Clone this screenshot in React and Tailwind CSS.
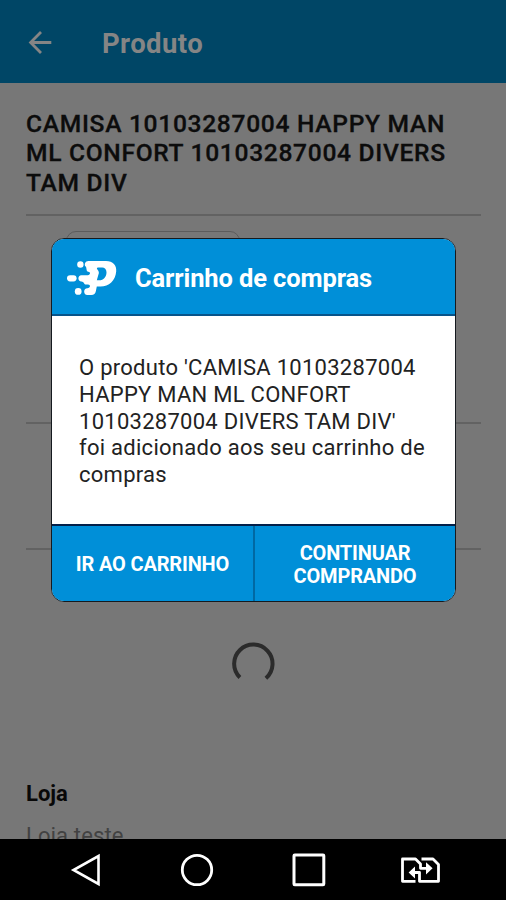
const roboto = "font-['Roboto','Liberation_Sans',sans-serif]";

function PLogo() {
  return (
    <svg width="50" height="36" viewBox="0 0 50 36" className="shrink-0" fill="#fff">
      <circle cx="13.4" cy="4.5" r="3.2" />
      <rect x="0" y="15.2" width="9.6" height="6.2" rx="3.1" />
      <circle cx="11.2" cy="31.4" r="3.4" />
      <path
        fillRule="evenodd"
        d="M21.5 .9H39C46 .9 49.8 5.2 49.2 11.5C48.4 20.5 42 26.6 33.5 26.6H29.8L28.9 31C28.4 33.7 27 35 24.3 35H20.4C16.1 35 16.1 28.3 20.4 28.3C23.6 28.3 23.8 24.6 21 24.6H19.2C16.8 24.6 17.2 21.4 14.4 21.4C10.4 21.4 10.4 15.2 14.4 15.2H20.8C23.6 15.2 23.7 11.8 21.2 11.8C19 11.8 20 7.6 18.6 6.5C16.8 4.6 18.2 .9 21.5 .9ZM31 7.4C29.6 7.4 29.6 8.8 30.6 9.8C32 11.2 32.3 13.2 31.3 15L29.8 20.3H32.2C36.6 20.1 39.5 16.7 39.5 12.2C39.5 9.2 37.6 7.4 35.2 7.4Z"
      />
    </svg>
  );
}

function Screen() {
  return (
    <div className="flex h-[839px] flex-col overflow-hidden bg-[#777777]">
      <header className="flex h-[83px] shrink-0 items-center bg-[#004666] pl-[28px]">
        <svg width="24" height="24" viewBox="0 0 24 24" fill="none" stroke="#858585" strokeWidth="2.8">
          <path d="M23.3 12.5H3M13 2L2.6 12.5L13 23" />
        </svg>
        <h1 className="ml-[50px] mt-[4px] text-[27.5px] font-bold leading-8 tracking-[0.4px] text-[#858585]">
          Produto
        </h1>
      </header>
      <main className="flex flex-col px-[26px] pt-[26px]">
        <h2 className="h-[107px] w-[455px] whitespace-nowrap border-b-2 border-[#626262] text-[24.6px] font-medium leading-[29.4px] tracking-[0.68px] text-[#0c0c0c] [-webkit-text-stroke:0.3px_#0c0c0c]">
          CAMISA 10103287004 HAPPY MAN
          <br />
          ML CONFORT 10103287004 DIVERS
          <br />
          TAM DIV
        </h2>
        <div className="h-[208px] w-[455px] border-b-2 border-[#626262] pl-[40px] pt-[15px]">
          <div className="h-[60px] w-[174px] rounded-[10px] border border-[#5c5c5c]" />
        </div>
        <div className="h-[126px] w-[455px] border-b-2 border-[#626262]" />
        <div className="flex h-[229px] justify-center pt-[91px]">
          <svg width="44" height="44" viewBox="0 0 44 44" fill="none" stroke="#2b2b2b" strokeWidth="4">
            <path d="M8.9 36.5A19.2 19.2 0 1 1 34.9 37.3" />
          </svg>
        </div>
        <h3 className="text-[22px] font-bold leading-[30px] text-[#080808]">Loja</h3>
        <p className="mt-[12px] text-[22px] leading-[30px] tracking-[0.15px] text-[#424242]">Loja teste</p>
      </main>
    </div>
  );
}

function NavBar() {
  return (
    <nav className="flex h-[61px] items-center bg-black pl-[70px]">
      <svg width="32" height="36" viewBox="0 0 32 36" fill="none" stroke="#fff" strokeWidth="2.6">
        <path d="M28.5 4V32L3.5 18Z" />
      </svg>
      <svg width="36" height="36" viewBox="0 0 36 36" fill="none" stroke="#fff" strokeWidth="2.8" className="ml-[77px]">
        <circle cx="18" cy="18" r="14.7" />
      </svg>
      <svg width="36" height="36" viewBox="0 0 36 36" fill="none" stroke="#fff" strokeWidth="3" className="ml-[76px]">
        <rect x="3" y="3" width="29.8" height="29.8" rx="0.8" />
      </svg>
      <svg width="40" height="26" viewBox="0 0 40 26" fill="none" stroke="#fff" strokeWidth="2.8" strokeLinejoin="round" className="ml-[73px]">
        <path d="M15.5 24.3H2.5V2H15.5L20.5 7V11.3H30" />
        <path d="M21.5 2H33L38.5 7.5V24.3H19.5V15.5H11" />
        <path d="M26 5.2L32.6 11.3L26 17.4ZM15 9.6L8.6 15.5L15 21.4Z" fill="#fff" stroke="none" />
      </svg>
    </nav>
  );
}

function CartDialog() {
  return (
    <div
      role="dialog"
      className="absolute left-[51px] top-[238px] flex h-[364px] w-[405px] flex-col overflow-hidden rounded-[13px] border border-[#151a1f] bg-white"
    >
      <div className="flex h-[77px] shrink-0 items-center border-b-2 border-[#07548a] bg-[#008fd8] pl-[15px] pt-[2px]">
        <PLogo />
        <h2 className="ml-[18px] mt-px whitespace-nowrap text-[25.5px] font-bold leading-8 tracking-[-0.12px] text-white">
          Carrinho de compras
        </h2>
      </div>
      <p className="grow whitespace-nowrap px-[27px] pt-[39px] text-[22px] leading-[26.8px] tracking-[0.27px] text-[#222]">
        O produto 'CAMISA 10103287004
        <br />
        HAPPY MAN ML CONFORT
        <br />
        10103287004 DIVERS TAM DIV'
        <br />
        foi adicionado aos seu carrinho de
        <br />
        compras
      </p>
      <div className="flex h-[77px] shrink-0 border-t-2 border-[#03204a] bg-[#008fd8] text-[20px] font-bold leading-[23px] tracking-[-0.17px] text-white">
        <button className="w-[203px] whitespace-nowrap border-r-2 border-[#0069a3] pt-[2px]">IR AO CARRINHO</button>
        <button className="grow pt-[2px]">
          CONTINUAR
          <br />
          COMPRANDO
        </button>
      </div>
    </div>
  );
}

export default function App() {
  return (
    <div className={`relative h-[900px] w-[506px] overflow-hidden ${roboto}`}>
      <Screen />
      <NavBar />
      <CartDialog />
    </div>
  );
}
